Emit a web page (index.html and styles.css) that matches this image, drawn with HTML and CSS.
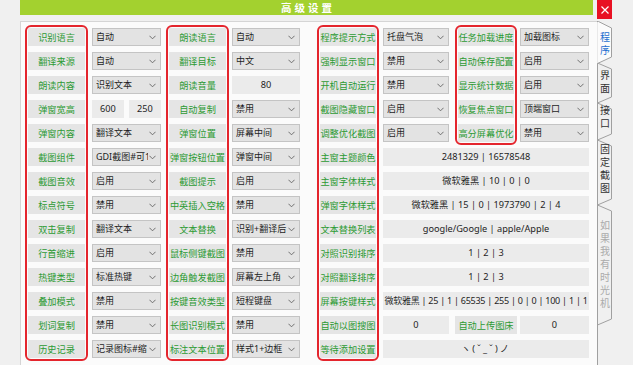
FILE: index.html
```html
<!DOCTYPE html>
<html lang="zh">
<head>
<meta charset="utf-8">
<title>高级设置</title>
<link rel="stylesheet" href="styles.css">
</head>
<body>
<div class="titlebar">
  <div class="title">高级设置</div>
  <div class="close"><svg width="8" height="8" viewBox="0 0 8 8"><path d="M0.5 0.5L7.5 7.5M7.5 0.5L0.5 7.5" stroke="#fff" stroke-width="1.2"/></svg></div>
</div>
<div class="main">
  <div class="panel">
    <div class="area">
      <div class="labels">
        <div class="lbl">识别语言</div>
        <div class="lbl">翻译来源</div>
        <div class="lbl">朗读内容</div>
        <div class="lbl">弹窗宽高</div>
        <div class="lbl">弹窗内容</div>
        <div class="lbl">截图组件</div>
        <div class="lbl">截图音效</div>
        <div class="lbl">标点符号</div>
        <div class="lbl">双击复制</div>
        <div class="lbl">行首缩进</div>
        <div class="lbl">热键类型</div>
        <div class="lbl">叠加模式</div>
        <div class="lbl">划词复制</div>
        <div class="lbl">历史记录</div>
      </div>
      <div class="values w69">
        <div class="sel"><span>自动</span><svg class="chev" viewBox="0 0 8 5"><path d="M0.5 0.5L4 4L7.5 0.5"/></svg></div>
        <div class="sel"><span>自动</span><svg class="chev" viewBox="0 0 8 5"><path d="M0.5 0.5L4 4L7.5 0.5"/></svg></div>
        <div class="sel"><span>识别文本</span><svg class="chev" viewBox="0 0 8 5"><path d="M0.5 0.5L4 4L7.5 0.5"/></svg></div>
        <div class="pair"><div class="box">600</div><div class="box">250</div></div>
        <div class="sel"><span>翻译文本</span><svg class="chev" viewBox="0 0 8 5"><path d="M0.5 0.5L4 4L7.5 0.5"/></svg></div>
        <div class="sel"><span>GDI截图#可1</span><svg class="chev" viewBox="0 0 8 5"><path d="M0.5 0.5L4 4L7.5 0.5"/></svg></div>
        <div class="sel"><span>启用</span><svg class="chev" viewBox="0 0 8 5"><path d="M0.5 0.5L4 4L7.5 0.5"/></svg></div>
        <div class="sel"><span>禁用</span><svg class="chev" viewBox="0 0 8 5"><path d="M0.5 0.5L4 4L7.5 0.5"/></svg></div>
        <div class="sel"><span>翻译文本</span><svg class="chev" viewBox="0 0 8 5"><path d="M0.5 0.5L4 4L7.5 0.5"/></svg></div>
        <div class="sel"><span>启用</span><svg class="chev" viewBox="0 0 8 5"><path d="M0.5 0.5L4 4L7.5 0.5"/></svg></div>
        <div class="sel"><span>标准热键</span><svg class="chev" viewBox="0 0 8 5"><path d="M0.5 0.5L4 4L7.5 0.5"/></svg></div>
        <div class="sel"><span>禁用</span><svg class="chev" viewBox="0 0 8 5"><path d="M0.5 0.5L4 4L7.5 0.5"/></svg></div>
        <div class="sel"><span>禁用</span><svg class="chev" viewBox="0 0 8 5"><path d="M0.5 0.5L4 4L7.5 0.5"/></svg></div>
        <div class="sel"><span>记录图标#缩</span><svg class="chev" viewBox="0 0 8 5"><path d="M0.5 0.5L4 4L7.5 0.5"/></svg></div>
      </div>
      <div class="labels">
        <div class="lbl">朗读语言</div>
        <div class="lbl">翻译目标</div>
        <div class="lbl">朗读音量</div>
        <div class="lbl">自动复制</div>
        <div class="lbl">弹窗位置</div>
        <div class="lbl">弹窗按钮位置</div>
        <div class="lbl">截图提示</div>
        <div class="lbl">中英插入空格</div>
        <div class="lbl">文本替换</div>
        <div class="lbl">鼠标侧键截图</div>
        <div class="lbl">边角触发截图</div>
        <div class="lbl">按键音效类型</div>
        <div class="lbl">长图识别模式</div>
        <div class="lbl">标注文本位置</div>
      </div>
      <div class="values w68">
        <div class="sel"><span>自动</span><svg class="chev" viewBox="0 0 8 5"><path d="M0.5 0.5L4 4L7.5 0.5"/></svg></div>
        <div class="sel"><span>中文</span><svg class="chev" viewBox="0 0 8 5"><path d="M0.5 0.5L4 4L7.5 0.5"/></svg></div>
        <div class="box">80</div>
        <div class="sel"><span>禁用</span><svg class="chev" viewBox="0 0 8 5"><path d="M0.5 0.5L4 4L7.5 0.5"/></svg></div>
        <div class="sel"><span>屏幕中间</span><svg class="chev" viewBox="0 0 8 5"><path d="M0.5 0.5L4 4L7.5 0.5"/></svg></div>
        <div class="sel"><span>弹窗中间</span><svg class="chev" viewBox="0 0 8 5"><path d="M0.5 0.5L4 4L7.5 0.5"/></svg></div>
        <div class="sel"><span>启用</span><svg class="chev" viewBox="0 0 8 5"><path d="M0.5 0.5L4 4L7.5 0.5"/></svg></div>
        <div class="sel"><span>禁用</span><svg class="chev" viewBox="0 0 8 5"><path d="M0.5 0.5L4 4L7.5 0.5"/></svg></div>
        <div class="sel"><span>识别+翻译后</span><svg class="chev" viewBox="0 0 8 5"><path d="M0.5 0.5L4 4L7.5 0.5"/></svg></div>
        <div class="sel"><span>禁用</span><svg class="chev" viewBox="0 0 8 5"><path d="M0.5 0.5L4 4L7.5 0.5"/></svg></div>
        <div class="sel"><span>屏幕左上角</span><svg class="chev" viewBox="0 0 8 5"><path d="M0.5 0.5L4 4L7.5 0.5"/></svg></div>
        <div class="sel"><span>短程键盘</span><svg class="chev" viewBox="0 0 8 5"><path d="M0.5 0.5L4 4L7.5 0.5"/></svg></div>
        <div class="sel"><span>禁用</span><svg class="chev" viewBox="0 0 8 5"><path d="M0.5 0.5L4 4L7.5 0.5"/></svg></div>
        <div class="sel"><span>样式1+边框</span><svg class="chev" viewBox="0 0 8 5"><path d="M0.5 0.5L4 4L7.5 0.5"/></svg></div>
      </div>
    </div>

    <div class="area">
      <div class="labels">
        <div class="lbl">程序提示方式</div>
        <div class="lbl">强制显示窗口</div>
        <div class="lbl">开机自动运行</div>
        <div class="lbl">截图隐藏窗口</div>
        <div class="lbl">调整优化截图</div>
        <div class="lbl">主窗主题颜色</div>
        <div class="lbl">主窗字体样式</div>
        <div class="lbl">弹窗字体样式</div>
        <div class="lbl">文本替换列表</div>
        <div class="lbl">对照识别排序</div>
        <div class="lbl">对照翻译排序</div>
        <div class="lbl">屏幕按键样式</div>
        <div class="lbl">自动以图搜图</div>
        <div class="lbl">等待添加设置</div>
      </div>
      <div class="rest">
        <div class="top">
          <div class="values w66">
            <div class="sel"><span>托盘气泡</span><svg class="chev" viewBox="0 0 8 5"><path d="M0.5 0.5L4 4L7.5 0.5"/></svg></div>
            <div class="sel"><span>禁用</span><svg class="chev" viewBox="0 0 8 5"><path d="M0.5 0.5L4 4L7.5 0.5"/></svg></div>
            <div class="sel"><span>禁用</span><svg class="chev" viewBox="0 0 8 5"><path d="M0.5 0.5L4 4L7.5 0.5"/></svg></div>
            <div class="sel"><span>启用</span><svg class="chev" viewBox="0 0 8 5"><path d="M0.5 0.5L4 4L7.5 0.5"/></svg></div>
            <div class="sel"><span>启用</span><svg class="chev" viewBox="0 0 8 5"><path d="M0.5 0.5L4 4L7.5 0.5"/></svg></div>
          </div>
          <div class="labels short">
            <div class="lbl">任务加载进度</div>
            <div class="lbl">自动保存配置</div>
            <div class="lbl">显示统计数据</div>
            <div class="lbl">恢复焦点窗口</div>
            <div class="lbl">高分屏幕优化</div>
          </div>
          <div class="values w69 last">
            <div class="sel"><span>加载图标</span><svg class="chev" viewBox="0 0 8 5"><path d="M0.5 0.5L4 4L7.5 0.5"/></svg></div>
            <div class="sel"><span>启用</span><svg class="chev" viewBox="0 0 8 5"><path d="M0.5 0.5L4 4L7.5 0.5"/></svg></div>
            <div class="sel"><span>启用</span><svg class="chev" viewBox="0 0 8 5"><path d="M0.5 0.5L4 4L7.5 0.5"/></svg></div>
            <div class="sel"><span>顶端窗口</span><svg class="chev" viewBox="0 0 8 5"><path d="M0.5 0.5L4 4L7.5 0.5"/></svg></div>
            <div class="sel"><span>禁用</span><svg class="chev" viewBox="0 0 8 5"><path d="M0.5 0.5L4 4L7.5 0.5"/></svg></div>
          </div>
        </div>
        <div class="rows">
          <div class="box">2481329 | 16578548</div>
          <div class="box">微软雅黑 | 10 | 0 | 0</div>
          <div class="box">微软雅黑 | 15 | 0 | 1973790 | 2 | 4</div>
          <div class="box">google/Google | apple/Apple</div>
          <div class="box">1 | 2 | 3</div>
          <div class="box">1 | 2 | 3</div>
          <div class="box tight">微软雅黑 | 25 | 1 | 65535 | 255 | 0 | 0 | 100 | 1 | 1</div>
          <div class="split">
            <div class="box w66">0</div>
            <div class="lbl plain">自动上传图床</div>
            <div class="box w69">0</div>
          </div>
          <div class="box face">ヽ(ˇ_ˇ)ノ</div>
        </div>
      </div>
    </div>
  </div>

  <svg class="tabs" width="20" height="345" viewBox="0 0 20 345">
    <polygon class="tab" points="0.5,185 14.5,191 14.5,299 0.5,305"/>
    <polygon class="tab" points="0.5,120 14.5,126 14.5,179 0.5,185"/>
    <polygon class="tab" points="0.5,83 14.5,89 14.5,114 0.5,120"/>
    <polygon class="tab" points="0.5,43 14.5,49 14.5,77 0.5,83"/>
    <line class="edge" x1="0.5" y1="43" x2="0.5" y2="345"/>
    <path class="tab active" d="M0,1.5 H1.5 L14.5,8 V37 L0.5,43.5 H0 Z"/>
    <line class="hide" x1="0" y1="2.2" x2="0" y2="43"/>
    <text class="vt t-on" x="8" y="12">程序</text>
    <text class="vt t" x="8" y="50">界面</text>
    <text class="vt t" x="8" y="85">接口</text>
    <text class="vt t" x="8" y="124">固定截图</text>
    <text class="vt t-off" x="8" y="200">如果我有时光机</text>
  </svg>
</div>
</body>
</html>
```
FILE: styles.css
```css
html, body {
  margin: 0;
  padding: 0;
}
body {
  background: #f0f0f0;
  font-family: "Noto Sans", "Noto Sans CJK SC", sans-serif;
  font-size: 9.2px;
  color: #1e1e1e;
  width: 633px;
  height: 365px;
  overflow: hidden;
}

.titlebar {
  display: flex;
  align-items: flex-start;
  padding-left: 20px;
  height: 20px;
}
.title {
  width: 570px;
  height: 15px;
  padding-left: 3px;
  background: #a3d12f;
  color: #fff;
  font-family: "Noto Sans CJK SC", sans-serif;
  font-weight: bold;
  font-size: 10.5px;
  letter-spacing: 3px;
  line-height: 15px;
  text-align: center;
}
.close {
  margin-left: 4px;
  width: 15px;
  height: 19px;
  background: #e81123;
  display: flex;
  align-items: center;
  justify-content: center;
}

.main {
  display: flex;
  align-items: flex-start;
}
.panel {
  margin-top: 1px;
  margin-left: 20px;
  width: 572px;
  height: 341px;
  padding: 3px 0 0 4px;
  border-top: 1px solid #d5d5d5;
  border-left: 1px solid #d5d5d5;
  background: #fbfbfb;
  display: flex;
  gap: 17px;
}

.area {
  display: flex;
  gap: 4px;
}

.labels {
  width: 57px;
  padding: 1px;
  border: 2px solid #e4252d;
  border-radius: 6px;
  display: flex;
  flex-direction: column;
  gap: 6px;
  align-self: flex-start;
}
.area > .labels:nth-child(3) {
  margin-left: 1px;
  margin-right: -1px;
}
.area + .area > .labels {
  width: 56px;
}

.lbl {
  height: 18px;
  line-height: 18px;
  background: #e5e5e5;
  color: #2c9a33;
  text-align: center;
  white-space: nowrap;
  font-family: "Noto Sans CJK SC", sans-serif;
  display: flex;
  justify-content: center;
}

.values {
  padding-top: 3px;
  display: flex;
  flex-direction: column;
  gap: 6px;
}
.w69 { width: 69px; }
.w68 { width: 68px; }
.w66 { width: 66px; }

.sel {
  height: 16px;
  border: 1px solid #c4c4c4;
  background: #e3e3e3;
  display: flex;
  align-items: center;
  padding: 0 4px 0 3px;
  gap: 1px;
  overflow: hidden;
  font-size: 9px;
}
.sel span {
  flex: 1;
  white-space: nowrap;
  overflow: hidden;
  line-height: 16px;
}
.chev {
  width: 7px;
  height: 5px;
  flex: none;
  fill: none;
  stroke: #606060;
  stroke-width: 1;
}

.box {
  height: 18px;
  line-height: 18px;
  background: #ebebeb;
  text-align: center;
  white-space: nowrap;
  display: flex;
  justify-content: center;
}
.tight {
  letter-spacing: -0.25px;
  font-size: 9px;
}
.face {
  letter-spacing: 2px;
}
.pair {
  display: flex;
  gap: 5px;
}
.pair .box {
  flex: 1;
}

.rest {
  width: 206px;
  display: flex;
  flex-direction: column;
}
.top {
  display: flex;
}
.top .labels {
  margin-left: 6px;
  width: 56px;
}
.top .last {
  margin-left: 3px;
}
.rows {
  margin-top: 3px;
  display: flex;
  flex-direction: column;
  gap: 6px;
}
.split {
  display: flex;
}
.split .plain {
  width: 62px;
  margin-left: 6px;
  margin-right: 3px;
}

.tabs {
  display: block;
  flex: none;
}
.tab {
  fill: #f0f0f0;
  stroke: #a0a0a0;
  stroke-width: 1;
}
.tab.active {
  fill: #fbfbfb;
}
.edge {
  stroke: #a0a0a0;
  stroke-width: 1;
}
.hide {
  stroke: #fbfbfb;
  stroke-width: 1.2;
}
.vt {
  font-family: "Noto Sans CJK SC", sans-serif;
  font-size: 10px;
  writing-mode: vertical-rl;
  letter-spacing: 3px;
}
.t-on { fill: #1f6fd0; }
.t { fill: #333; }
.t-off { fill: #ababab; }
```
